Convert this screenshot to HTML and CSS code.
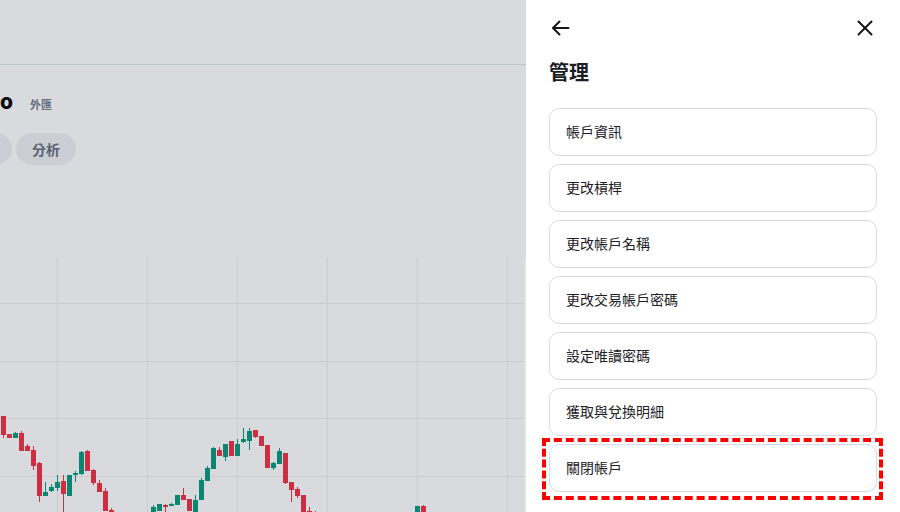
FILE: index.html
```html
<!DOCTYPE html>
<html lang="zh-Hant">
<head>
<meta charset="utf-8">
<title>管理</title>
<link rel="stylesheet" href="styles.css">
</head>
<body>
<div class="page">
  <main class="backdrop">
    <div class="topbar"></div>
    <div class="title-row">
      <span class="acct-name">o</span>
      <span class="acct-type">外匯</span>
    </div>
    <div class="pill-row">
      <span class="pill pill--offscreen"></span>
      <span class="pill">分析</span>
    </div>
    <div class="chart">
      <svg class="chart-svg" width="526" height="255" viewBox="0 257 526 255">
        <g class="grid">
          <line x1="57.5" y1="257" x2="57.5" y2="512"/>
          <line x1="147.5" y1="257" x2="147.5" y2="512"/>
          <line x1="237.5" y1="257" x2="237.5" y2="512"/>
          <line x1="327.5" y1="257" x2="327.5" y2="512"/>
          <line x1="417.5" y1="257" x2="417.5" y2="512"/>
          <line x1="507.5" y1="257" x2="507.5" y2="512"/>
          <line x1="0" y1="303.5" x2="526" y2="303.5"/>
          <line x1="0" y1="361.5" x2="526" y2="361.5"/>
          <line x1="0" y1="418.5" x2="526" y2="418.5"/>
          <line x1="0" y1="476.5" x2="526" y2="476.5"/>
        </g>
        <g class="down">
          <rect x="1" y="416" width="5" height="19"/><rect x="3" y="416" width="1" height="22"/>
          <rect x="7" y="434" width="5" height="4"/>
          <rect x="19" y="433" width="5" height="18"/><rect x="21" y="431" width="1" height="20"/>
          <rect x="25" y="446" width="5" height="5"/><rect x="27" y="444" width="1" height="7"/>
          <rect x="31" y="450" width="5" height="16"/><rect x="33" y="446" width="1" height="24"/>
          <rect x="37" y="463" width="5" height="33"/><rect x="39" y="462" width="1" height="40"/>
          <rect x="61" y="481" width="5" height="13"/><rect x="63" y="475" width="1" height="37"/>
          <rect x="85" y="451" width="5" height="20"/><rect x="87" y="450" width="1" height="21"/>
          <rect x="91" y="470" width="5" height="13"/><rect x="93" y="469" width="1" height="16"/>
          <rect x="97" y="483" width="5" height="9"/><rect x="99" y="480" width="1" height="12"/>
          <rect x="103" y="491" width="5" height="20"/><rect x="105" y="488" width="1" height="23"/>
          <rect x="109" y="510" width="5" height="2"/><rect x="111" y="508" width="1" height="4"/>
          <rect x="163" y="505" width="5" height="2"/><rect x="165" y="504" width="1" height="8"/>
          <rect x="181" y="495" width="5" height="5"/><rect x="183" y="488" width="1" height="12"/>
          <rect x="187" y="499" width="5" height="12"/>
          <rect x="217" y="450" width="5" height="6"/><rect x="219" y="447" width="1" height="9"/>
          <rect x="229" y="441" width="5" height="15"/>
          <rect x="253" y="430" width="5" height="7"/><rect x="255" y="430" width="1" height="8"/>
          <rect x="259" y="436" width="5" height="10"/>
          <rect x="265" y="445" width="5" height="23"/>
          <rect x="283" y="453" width="5" height="30"/><rect x="285" y="453" width="1" height="31"/>
          <rect x="289" y="482" width="5" height="8"/><rect x="291" y="482" width="1" height="20"/>
          <rect x="295" y="489" width="5" height="7"/><rect x="297" y="487" width="1" height="11"/>
          <rect x="301" y="495" width="5" height="17"/>
          <rect x="307" y="511" width="5" height="1"/><rect x="309" y="507" width="1" height="5"/>
          <rect x="315" y="511" width="1" height="1"/>
          <rect x="421" y="506" width="5" height="6"/><rect x="423" y="505" width="1" height="7"/>
        </g>
        <g class="up">
          <rect x="13" y="433" width="5" height="5"/><rect x="15" y="432" width="1" height="6"/>
          <rect x="43" y="492" width="5" height="4"/><rect x="45" y="482" width="1" height="14"/>
          <rect x="49" y="487" width="5" height="4"/><rect x="51" y="484" width="1" height="8"/>
          <rect x="55" y="482" width="5" height="6"/><rect x="57" y="475" width="1" height="16"/>
          <rect x="67" y="475" width="5" height="21"/>
          <rect x="73" y="473" width="5" height="2"/><rect x="75" y="471" width="1" height="11"/>
          <rect x="79" y="452" width="5" height="22"/><rect x="81" y="451" width="1" height="24"/>
          <rect x="151" y="507" width="5" height="5"/><rect x="153" y="505" width="1" height="7"/>
          <rect x="157" y="504" width="5" height="7"/>
          <rect x="169" y="504" width="5" height="2"/><rect x="171" y="503" width="1" height="3"/>
          <rect x="175" y="495" width="5" height="10"/>
          <rect x="193" y="500" width="5" height="12"/><rect x="195" y="495" width="1" height="17"/>
          <rect x="199" y="480" width="5" height="20"/><rect x="201" y="478" width="1" height="22"/>
          <rect x="205" y="468" width="5" height="13"/><rect x="207" y="466" width="1" height="15"/>
          <rect x="211" y="448" width="5" height="21"/><rect x="213" y="447" width="1" height="22"/>
          <rect x="223" y="444" width="5" height="13"/><rect x="225" y="444" width="1" height="17"/>
          <rect x="235" y="444" width="5" height="12"/><rect x="237" y="439" width="1" height="17"/>
          <rect x="241" y="439" width="5" height="3"/><rect x="243" y="428" width="1" height="15"/>
          <rect x="247" y="431" width="5" height="10"/><rect x="249" y="428" width="1" height="22"/>
          <rect x="271" y="463" width="5" height="5"/><rect x="273" y="462" width="1" height="8"/>
          <rect x="277" y="451" width="5" height="13"/><rect x="279" y="448" width="1" height="16"/>
          <rect x="415" y="506" width="5" height="6"/>
        </g>
        <line class="edge" x1="525" y1="257" x2="525" y2="512"/>
      </svg>
    </div>
  </main>

  <aside class="panel">
    <div class="panel-head">
      <button class="icon-btn" aria-label="返回">
        <svg width="24" height="24" viewBox="0 0 24 24" fill="none" stroke="currentColor" stroke-width="2" stroke-linecap="round" stroke-linejoin="round">
          <path d="M19.5 12H4.5"/>
          <path d="M10.5 5.5L4 12l6.5 6.5"/>
        </svg>
      </button>
      <button class="icon-btn" aria-label="關閉">
        <svg width="24" height="24" viewBox="0 0 24 24" fill="none" stroke="currentColor" stroke-width="2" stroke-linecap="round">
          <path d="M5.5 5.5l13 13"/>
          <path d="M18.5 5.5l-13 13"/>
        </svg>
      </button>
    </div>
    <h1 class="panel-title">管理</h1>
    <ul class="menu">
      <li class="menu-item">帳戶資訊</li>
      <li class="menu-item">更改槓桿</li>
      <li class="menu-item">更改帳戶名稱</li>
      <li class="menu-item">更改交易帳戶密碼</li>
      <li class="menu-item">設定唯讀密碼</li>
      <li class="menu-item">獲取與兌換明細</li>
      <li class="menu-item menu-item--highlight">關閉帳戶</li>
    </ul>
  </aside>
</div>
</body>
</html>
```

FILE: styles.css
```css
* {
  box-sizing: border-box;
}

html, body {
  margin: 0;
  padding: 0;
}

body {
  width: 900px;
  height: 512px;
  overflow: hidden;
  font-family: "Noto Sans CJK TC", "Noto Sans", sans-serif;
  background: #d9dadd;
}

.page {
  display: flex;
  width: 900px;
  height: 512px;
}

.backdrop {
  width: 526px;
  height: 512px;
  flex: none;
  background: #d9dadd;
  display: flex;
  flex-direction: column;
  overflow: hidden;
}

.topbar {
  height: 65px;
  flex: none;
  border-bottom: 1px solid #bfc5cc;
}

.title-row {
  display: flex;
  align-items: baseline;
  gap: 17px;
  height: 28px;
  margin-top: 23px;
}

.acct-name {
  font-family: Inter, "Noto Sans", sans-serif;
  font-weight: 800;
  font-size: 21px;
  line-height: 28px;
  color: #0b0c0e;
}

.acct-type {
  font-family: "Noto Sans CJK TC", sans-serif;
  font-weight: 700;
  font-size: 11px;
  color: #667084;
}

.pill-row {
  display: flex;
  gap: 4px;
  margin-top: 17px;
  margin-left: -48px;
}

.pill {
  height: 32px;
  padding: 0 16px;
  border-radius: 16px;
  background: #cbced4;
  color: #596173;
  font-weight: 700;
  font-size: 14px;
  line-height: 32px;
}

.pill--offscreen {
  width: 60px;
  padding: 0;
}

.chart {
  margin-top: 92px;
  height: 255px;
  flex: none;
}

.chart-svg {
  display: block;
}

.grid line {
  stroke: #cbccd0;
  stroke-width: 1;
}

.edge {
  stroke: #e1e2e4;
  stroke-width: 2;
}

.down rect {
  fill: #cd2f42;
}

.up rect {
  fill: #0b8670;
}

.panel {
  width: 374px;
  flex: none;
  height: 512px;
  background: #ffffff;
  padding: 16px 23px 0 23px;
  display: flex;
  flex-direction: column;
}

.panel-head {
  display: flex;
  justify-content: space-between;
  align-items: center;
  height: 24px;
}

.icon-btn {
  width: 24px;
  height: 24px;
  padding: 0;
  margin: 0;
  border: 0;
  background: none;
  color: #15171c;
  display: flex;
  align-items: center;
  justify-content: center;
}

.icon-btn svg {
  display: block;
}

.panel-title {
  margin: 18px 0 0 0;
  font-size: 20px;
  line-height: 28px;
  font-weight: 700;
  color: #1b1e27;
}

.menu {
  list-style: none;
  margin: 22px 0 0 0;
  padding: 0;
  display: flex;
  flex-direction: column;
  gap: 8px;
}

.menu-item {
  position: relative;
  height: 48px;
  display: flex;
  align-items: center;
  padding: 0 16px 2px 16px;
  border: 1px solid #d4dce7;
  border-radius: 10px;
  font-size: 14px;
  color: #1d2027;
  background: #ffffff;
}

.menu-item--highlight::after {
  content: "";
  position: absolute;
  top: -7px;
  left: -8px;
  right: -7px;
  bottom: -9px;
  border: 4px dashed #ff0000;
  pointer-events: none;
}
```
